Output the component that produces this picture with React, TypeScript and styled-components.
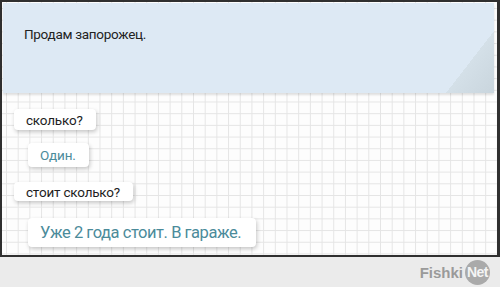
import React from "react";
import styled, { createGlobalStyle } from "styled-components";

const Global = createGlobalStyle`
  html, body { margin: 0; padding: 0; }
  body { background: #ebebeb; width: 500px; height: 287px; overflow: hidden; }
`;

const Page = styled.div`
  width: 500px;
  height: 287px;
  display: flex;
  flex-direction: column;
  background: #ebebeb;
`;

const Frame = styled.div`
  box-sizing: border-box;
  width: 500px;
  height: 257px;
  border: 2px solid #2f2f2f;
  border-right-width: 3px;
  background-color: #fdfdfd;
  background-image:
    linear-gradient(to right, #e5e5e5 1px, transparent 1px),
    linear-gradient(to bottom, #e5e5e5 1px, transparent 1px);
  background-size: 11.7px 11.7px;
  background-position: 4px 6px;
  padding: 1px 3px 0 1px;
  display: flex;
  flex-direction: column;
`;

const Header = styled.div`
  position: relative;
  height: 90px;
  background: #dde9f4;
  box-shadow: 0 2px 2px rgba(0, 0, 0, 0.12);
  padding: 23px 0 0 21px;
  box-sizing: border-box;
  font-family: Roboto, "Noto Sans", sans-serif;
  font-size: 13.5px;
  letter-spacing: -0.3px;
  color: #222;
  overflow: hidden;
  &::after {
    content: "";
    position: absolute;
    right: 0;
    bottom: 0;
    width: 48px;
    height: 62px;
    background: linear-gradient(
      to bottom right,
      transparent 50%,
      #d4e0e8 50%,
      #c9d5dd 100%
    );
  }
`;

const Thread = styled.div`
  display: flex;
  flex-direction: column;
  align-items: flex-start;
  padding-top: 16px;
`;

const Bubble = styled.div<{ $answer?: boolean; $big?: boolean; $gap: number; $h: number }>`
  box-sizing: border-box;
  height: ${(p) => p.$h}px;
  margin-top: ${(p) => p.$gap}px;
  margin-left: ${(p) => (p.$answer ? 25 : 11)}px;
  padding: 0 ${(p) => (p.$big ? 15 : 13)}px 0 12px;
  display: flex;
  align-items: center;
  background: #ffffff;
  border-radius: 4px;
  box-shadow: 1px 2px 4px rgba(0, 0, 0, 0.22);
  font-family: Roboto, "Noto Sans", sans-serif;
  font-size: ${(p) => (p.$big ? 16.5 : 13.5)}px;
  letter-spacing: ${(p) => (p.$big ? -0.45 : -0.2)}px;
  color: ${(p) => (p.$answer ? "#4b8b9a" : "#1e1e1e")};
  white-space: nowrap;
`;

const Footer = styled.div`
  flex: 1;
  display: flex;
  align-items: center;
  justify-content: flex-end;
  padding-right: 10px;
  gap: 2px;
`;

const Brand = styled.span`
  font-family: "Liberation Sans", Arial, sans-serif;
  font-weight: bold;
  font-size: 15px;
  color: #9a9a9a;
`;

const NetBadge = styled.span`
  width: 25px;
  height: 25px;
  border-radius: 50%;
  background: #aaaaaa;
  display: flex;
  align-items: center;
  justify-content: center;
  font-family: "Liberation Sans", Arial, sans-serif;
  font-weight: bold;
  font-size: 14px;
  color: #f4f4f4;
  letter-spacing: -0.5px;
`;

export default function App() {
  return (
    <Page>
      <Global />
      <Frame>
        <Header>Продам запорожец.</Header>
        <Thread>
          <Bubble $gap={0} $h={21}>сколько?</Bubble>
          <Bubble $answer $gap={13} $h={24}>Один.</Bubble>
          <Bubble $gap={15} $h={19}>стоит сколько?</Bubble>
          <Bubble $answer $big $gap={17} $h={29}>Уже 2 года стоит. В гараже.</Bubble>
        </Thread>
      </Frame>
      <Footer>
        <Brand>Fishki</Brand>
        <NetBadge>Net</NetBadge>
      </Footer>
    </Page>
  );
}
